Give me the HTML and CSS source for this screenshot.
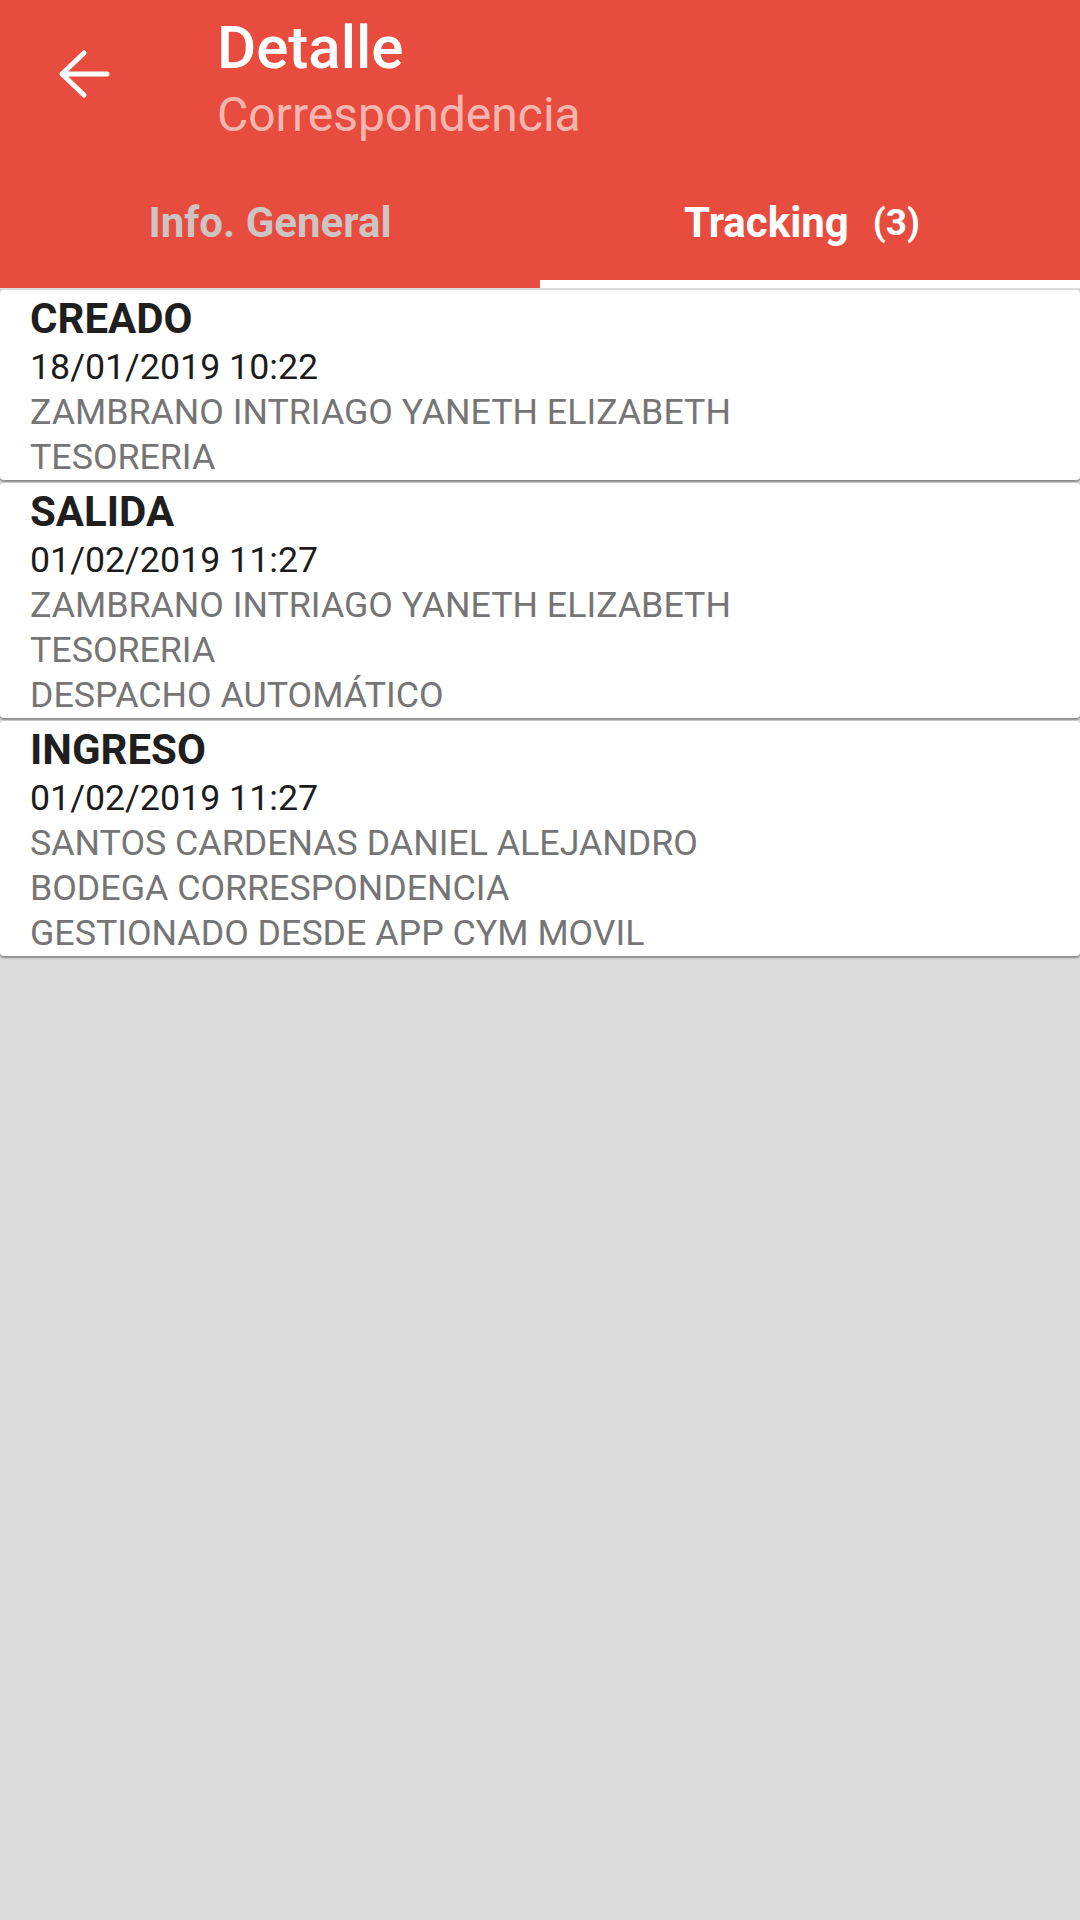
FILE: index.html
```html
<!DOCTYPE html>
<html lang="es">
<head>
<meta charset="utf-8">
<title>Detalle - Correspondencia</title>
<link rel="stylesheet" href="styles.css">
</head>
<body>
<div class="screen">
  <header class="appbar">
    <div class="toolbar">
      <div class="nav">
        <svg class="back" viewBox="0 0 70 70" width="70" height="70">
          <path d="M59 34H14M36 13L14 34l22 21" fill="none" stroke="#fff" stroke-width="5" stroke-linecap="round" stroke-linejoin="round"/>
        </svg>
      </div>
      <div class="titles">
        <div class="title">Detalle</div>
        <div class="subtitle">Correspondencia</div>
      </div>
    </div>
    <nav class="tabs">
      <div class="tab">Info. General</div>
      <div class="tab active">Tracking<span class="count">(3)</span></div>
    </nav>
  </header>
  <main class="list">
    <section class="card">
      <div class="state">CREADO</div>
      <div class="date">18/01/2019 10:22</div>
      <div class="info">ZAMBRANO INTRIAGO YANETH ELIZABETH</div>
      <div class="info">TESORERIA</div>
    </section>
    <section class="card">
      <div class="state">SALIDA</div>
      <div class="date">01/02/2019 11:27</div>
      <div class="info">ZAMBRANO INTRIAGO YANETH ELIZABETH</div>
      <div class="info">TESORERIA</div>
      <div class="info">DESPACHO AUTOMÁTICO</div>
    </section>
    <section class="card">
      <div class="state">INGRESO</div>
      <div class="date">01/02/2019 11:27</div>
      <div class="info">SANTOS CARDENAS DANIEL ALEJANDRO</div>
      <div class="info">BODEGA CORRESPONDENCIA</div>
      <div class="info">GESTIONADO DESDE APP CYM MOVIL</div>
    </section>
  </main>
</div>
</body>
</html>
```
FILE: styles.css
```css
* { box-sizing: border-box; }
html, body {
  margin: 0;
  padding: 0;
  background: #dcdcdc;
  font-family: Roboto, "Noto Sans", "Liberation Sans", sans-serif;
}
.screen {
  width: 1080px;
  min-height: 1920px;
  background: #dcdcdc;
}
.appbar {
  background: #e74c3e;
  color: #fff;
}
.toolbar {
  height: 165px;
  display: flex;
  align-items: flex-start;
  padding-top: 13px;
}
.nav {
  width: 217px;
  padding-left: 48px;
  padding-top: 27px;
}
.back { display: block; }
.titles { display: flex; flex-direction: column; }
.title {
  font-size: 60px;
  font-weight: 500;
  line-height: 70px;
}
.subtitle {
  font-size: 48px;
  line-height: 64px;
  color: rgba(255,255,255,0.62);
}
.tabs {
  display: flex;
  height: 123px;
}
.tab {
  flex: none;
  width: 50%;
  display: flex;
  align-items: center;
  justify-content: center;
  font-size: 42px;
  font-weight: 700;
  color: #cdc4c3;
  border-bottom: 8px solid transparent;
}
.tab.active {
  color: #fff;
  border-bottom-color: #fff;
  padding-right: 16px;
}
.count {
  font-size: 37px;
  margin-left: 24px;
}
.list {
  padding-top: 2px;
  display: flex;
  flex-direction: column;
  gap: 3px;
}
.card {
  background: #fff;
  border-radius: 4px;
  box-shadow: 0 2px 2px rgba(0,0,0,0.38);
  padding: 3px 30px 0;
}
.state {
  font-size: 42px;
  font-weight: 700;
  line-height: 52px;
  color: #1f1f1f;
}
.date {
  font-size: 35.75px;
  line-height: 45px;
  color: #1c1c1c;
}
.info {
  font-size: 35.75px;
  line-height: 45px;
  color: #757575;
}
```
